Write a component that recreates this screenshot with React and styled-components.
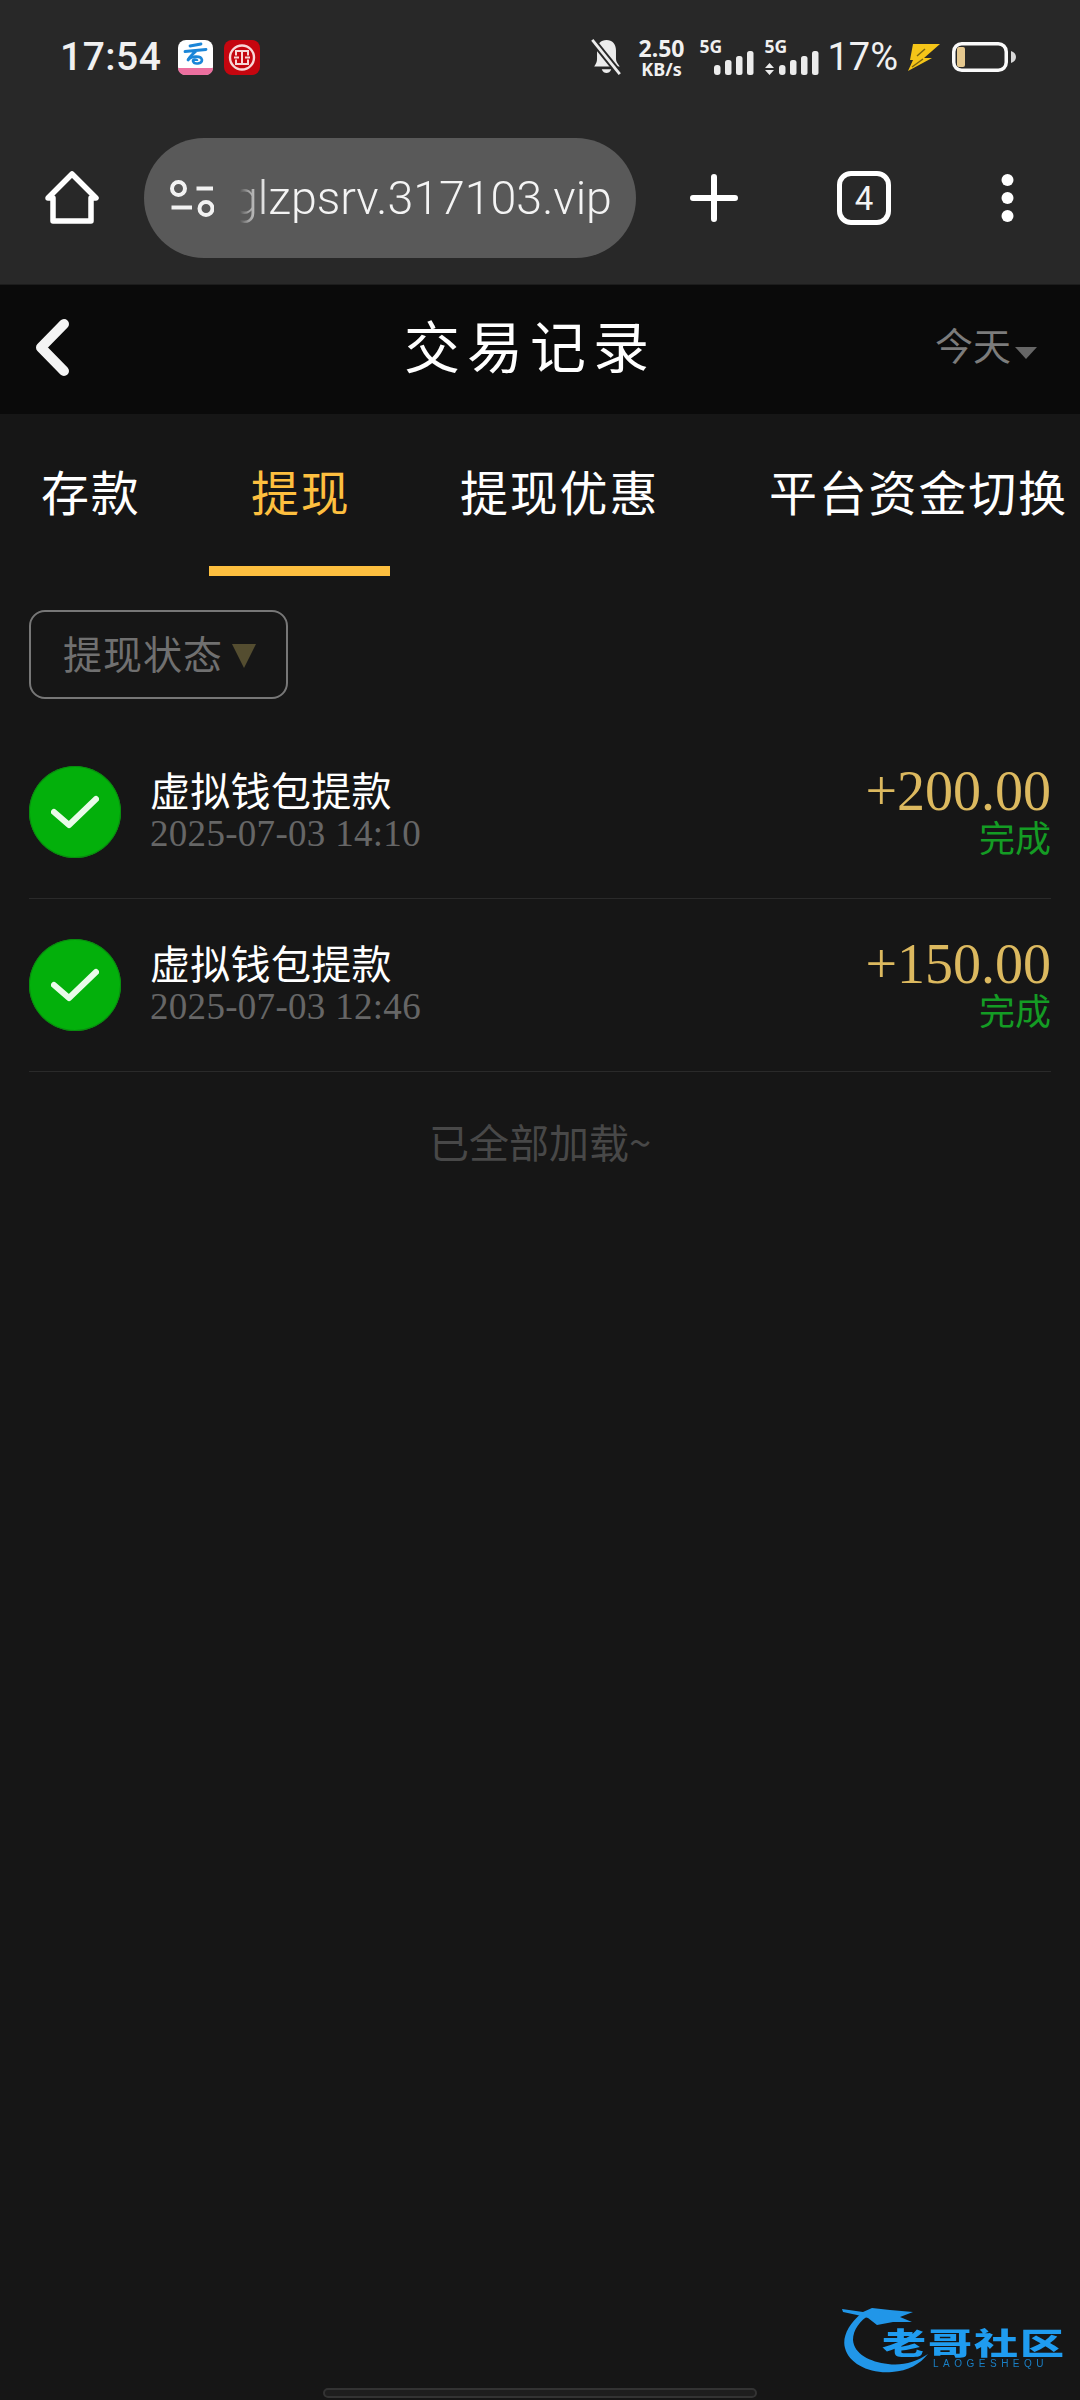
import React from "react";
import styled, { createGlobalStyle } from "styled-components";

const CJK = `"Noto Sans CJK SC", sans-serif`;
const SERIF_CJK = `"Liberation Serif", "Noto Sans CJK SC", serif`;

const Global = createGlobalStyle`
  html, body {
    margin: 0;
    padding: 0;
    background: #161616;
  }
`;
const Page = styled.div`
  position: relative;
  width: 1080px;
  height: 2400px;
  overflow: hidden;
  display: flex;
  flex-direction: column;
  background: #161616;
  font-family: ${CJK};
`;
const Chrome = styled.div`
  height: 284px;
  background: #282828;
  border-bottom: 1px solid #1c1c1c;
  display: flex;
  flex-direction: column;
  flex-shrink: 0;
`;
const StatusBar = styled.div`
  height: 114px;
  display: flex;
  align-items: center;
  justify-content: space-between;
  padding: 0 64px 0 60px;
  color: #f0f0f0;
`;
const StatusGroup = styled.div`
  display: flex;
  align-items: center;
`;
const Clock = styled.div`
  font-family: Roboto, sans-serif;
  font-weight: 500;
  font-size: 39px;
  letter-spacing: 0.5px;
  margin-right: 17px;
`;
const StatusIcon = styled.svg`
  display: block;
  flex-shrink: 0;
  margin-left: ${(p) => p.$ml || 0}px;
`;
const Speed = styled.div`
  font-family: "Noto Sans", sans-serif;
  font-weight: 700;
  display: flex;
  flex-direction: column;
  align-items: center;
  line-height: 1;
  font-size: 23px;
  margin-left: ${(p) => p.$ml}px;
  small {
    font-size: 18px;
  }
`;
const Signal = styled.div`
  position: relative;
  width: 54px;
  height: 36px;
  margin-left: ${(p) => p.$ml}px;
  span {
    position: absolute;
    left: 0;
    top: -1px;
    line-height: 1;
    font-family: "Noto Sans", sans-serif;
    font-weight: 700;
    font-size: 17.5px;
  }
  svg {
    position: absolute;
    left: 0;
    bottom: 0;
  }
`;
const Percent = styled.div`
  font-family: Roboto, sans-serif;
  font-size: 38px;
  margin-left: 9px;
`;
const Toolbar = styled.div`
  height: 120px;
  margin-top: 24px;
  display: flex;
  align-items: center;
  padding: 0 0 0 45px;
`;
const ToolIcon = styled.svg`
  flex-shrink: 0;
  display: block;
  margin-left: ${(p) => p.$ml || 0}px;
`;
const UrlPill = styled.div`
  width: 492px;
  height: 120px;
  box-sizing: border-box;
  border-radius: 60px;
  background: #595959;
  margin-left: 45px;
  padding-left: 26px;
  display: flex;
  align-items: center;
  overflow: hidden;
  flex-shrink: 0;
`;
const UrlText = styled.div`
  font-family: Roboto, sans-serif;
  font-size: 46.5px;
  font-weight: 300;
  color: #f4f4f4;
  margin-left: 18px;
  white-space: nowrap;
  mask-image: linear-gradient(90deg, transparent 8px, rgba(0, 0, 0, 0.45) 16px, #000 36px);
`;
const TabCount = styled.div`
  width: 54px;
  height: 54px;
  box-sizing: border-box;
  border: 5px solid #fff;
  border-radius: 14px;
  color: #f4f4f4;
  font-family: Roboto, sans-serif;
  font-size: 33px;
  display: flex;
  align-items: center;
  justify-content: center;
  margin-left: 99px;
  flex-shrink: 0;
`;
const Header = styled.div`
  height: 129px;
  box-sizing: border-box;
  padding-bottom: 12px;
  background: #0a0a0a;
  display: flex;
  align-items: center;
  justify-content: center;
  position: relative;
  flex-shrink: 0;
`;
const BackIcon = styled.svg`
  position: absolute;
  left: 34px;
  top: 31px;
`;
const Title = styled.div`
  font-size: 56px;
  color: #fff;
  letter-spacing: 7px;
  margin-right: 20px;
`;
const DayPicker = styled.div`
  position: absolute;
  right: 43px;
  top: 0;
  bottom: 0;
  padding-bottom: 12px;
  display: flex;
  align-items: center;
  color: #7c7c7c;
  font-size: 38px;
`;
const Caret = styled.i`
  display: block;
  width: 0;
  height: 0;
  margin: ${(p) => p.$margin};
  border-left: ${(p) => p.$w / 2}px solid transparent;
  border-right: ${(p) => p.$w / 2}px solid transparent;
  border-top: ${(p) => p.$h}px solid ${(p) => p.$color};
`;
const Tabs = styled.div`
  display: flex;
  height: 182px;
  flex-shrink: 0;
  white-space: nowrap;
  overflow: hidden;
`;
const Tab = styled.div`
  width: ${(p) => p.$w}px;
  flex-shrink: 0;
  box-sizing: border-box;
  padding-top: 41px;
  padding-left: ${(p) => p.$pl}px;
  font-size: 48px;
  line-height: 70px;
  color: ${(p) => (p.$active ? "#fdbf3f" : "#fff")};
  letter-spacing: 1.8px;
  position: relative;
  &::after {
    content: "";
    display: ${(p) => (p.$active ? "block" : "none")};
    position: absolute;
    left: 0;
    bottom: 20px;
    width: 100%;
    height: 10px;
    background: #fdbf3f;
  }
`;
const Filters = styled.div`
  padding: 0 29px;
  margin-top: 14px;
  flex-shrink: 0;
`;
const FilterBtn = styled.div`
  width: 259px;
  height: 89px;
  box-sizing: border-box;
  border: 2px solid #777;
  border-radius: 16px;
  display: flex;
  align-items: center;
  padding-left: 32px;
  padding-bottom: 5px;
  font-size: 39px;
  letter-spacing: 1px;
  color: #707070;
`;
const List = styled.div`
  margin: 27px 29px 0;
`;
const Row = styled.div`
  height: 173px;
  box-sizing: border-box;
  border-bottom: 1px solid #2a2a2a;
  display: flex;
  align-items: flex-start;
  padding-top: 40px;
`;
const StatusDot = styled.div`
  width: 92px;
  height: 92px;
  border-radius: 50%;
  background: #03b00b;
  box-shadow: inset 0 0 0 1px #0a8a10;
  display: flex;
  align-items: center;
  justify-content: center;
  flex-shrink: 0;
`;
const RowInfo = styled.div`
  margin-left: 29px;
  margin-top: -1px;
  flex: 1;
`;
const RowTitle = styled.div`
  font-size: 40px;
  line-height: 48px;
  letter-spacing: 0.3px;
  color: #fff;
`;
const RowTime = styled.div`
  font-family: ${SERIF_CJK};
  font-size: 37px;
  line-height: 41px;
  letter-spacing: 0.3px;
  color: #666;
`;
const RowRight = styled.div`
  text-align: right;
  margin-top: -2px;
`;
const Amount = styled.div`
  font-family: ${SERIF_CJK};
  font-size: 56px;
  line-height: 54px;
  color: #dcb95f;
`;
const Status = styled.div`
  font-size: 36px;
  line-height: 36px;
  color: #149c24;
`;
const LoadedAll = styled.div`
  text-align: center;
  font-size: 40px;
  line-height: 54px;
  color: #484848;
  margin-top: 42px;
`;
const Watermark = styled.div`
  position: absolute;
  left: 842px;
  top: 2304px;
  width: 224px;
  height: 72px;
  filter: blur(0.5px);
`;
const WatermarkName = styled.div`
  position: absolute;
  left: 40px;
  top: 22px;
  font-size: 44px;
  line-height: 30px;
  font-weight: 900;
  letter-spacing: 2px;
  color: #1f9cf0;
  white-space: nowrap;
  transform: scaleY(0.68);
`;
const WatermarkSub = styled.div`
  position: absolute;
  left: 91px;
  top: 55px;
  font-family: "Liberation Sans", sans-serif;
  font-size: 10px;
  line-height: 10px;
  letter-spacing: 4.5px;
  color: #1a7fc4;
  white-space: nowrap;
`;
const HomeBar = styled.div`
  position: absolute;
  left: 323px;
  bottom: 2px;
  width: 434px;
  height: 10px;
  box-sizing: border-box;
  background: #1e1e1e;
  border: 2px solid #333;
  border-radius: 5px;
`;

function Bars({ arrows }) {
  return (
    <svg width="55" height="24" viewBox="0 0 55 24" fill="#ececec">
      {arrows && <path d="M5.500 12l4.500 5H1zM5.500 24L1 19h9z" />}
      <rect x="15" y="14" width="6.500" height="10" rx="3" />
      <rect x="26" y="9" width="6.500" height="15" rx="2.500" />
      <rect x="37" y="5" width="6.500" height="19" rx="2.500" />
      <rect x="48" y="0" width="6.500" height="24" rx="2.500" />
    </svg>
  );
}

function Record({ time, amount }) {
  return (
    <Row>
      <StatusDot>
        <svg width="48" height="36" viewBox="0 0 48 36" fill="none">
          <path d="M3 18 L18 31 L45 5" stroke="#e9fbe9" strokeWidth="6" strokeLinecap="round" strokeLinejoin="round" />
        </svg>
      </StatusDot>
      <RowInfo>
        <RowTitle>虚拟钱包提款</RowTitle>
        <RowTime>{time}</RowTime>
      </RowInfo>
      <RowRight>
        <Amount>{amount}</Amount>
        <Status>完成</Status>
      </RowRight>
    </Row>
  );
}

export default function App() {
  return (
    <Page>
      <Global />
      <Chrome>
        <StatusBar>
          <StatusGroup>
            <Clock>17:54</Clock>
            <StatusIcon width="35" height="35" viewBox="0 0 35 35">
              <rect width="35" height="35" rx="8" fill="#fff" />
              <path d="M0 28h35v0a7 7 0 0 1-7 7H7a7 7 0 0 1-7-7z" fill="#ec6f9f" />
              <path d="M12 6l11-2M7 11.500l21-2M18 11c-3 3-7 6-8 9" stroke="#1b86d8" strokeWidth="2.800" fill="none" strokeLinecap="round" />
              <path d="M10 20c3-4 13-5 14 0 0 4-8 5-9 1 0-2 4-2 4 0" stroke="#1b86d8" strokeWidth="2.600" fill="none" />
            </StatusIcon>
            <StatusIcon width="36" height="35" viewBox="0 0 36 35" $ml={11}>
              <rect width="36" height="35" rx="8" fill="#c5060f" />
              <circle cx="18" cy="17.500" r="12" stroke="#f7d8d8" strokeWidth="2.400" fill="none" />
              <path d="M12 15.500v-4.500h12v4.500M12 19.500v4.500h12v-4.500M18 11v13M10 17.500h5M21 17.500h5" stroke="#f7d8d8" strokeWidth="2" fill="none" />
            </StatusIcon>
          </StatusGroup>
          <StatusGroup>
            <StatusIcon width="31" height="36" viewBox="0 0 32 38" fill="#ececec">
              <path d="M16 1c6 0 10 4 10 11v9c0 3 2 5 4 8H3c2-3 3-5 3-8v-9C6 5 10 1 16 1z" />
              <path d="M11 32h10c-1 3-3 4-5 4s-4-1-5-4z" />
              <path d="M1 1l29 36" stroke="#282828" strokeWidth="7" />
              <path d="M1 1l29 36" stroke="#ececec" strokeWidth="3" />
            </StatusIcon>
            <Speed $ml={17}>
              2.50
              <small>KB/s</small>
            </Speed>
            <Signal $ml={15}>
              <span>5G</span>
              <Bars />
            </Signal>
            <Signal $ml={11}>
              <span>5G</span>
              <Bars arrows />
            </Signal>
            <Percent>17%</Percent>
            <StatusIcon width="33" height="28" viewBox="0 0 33 28" $ml={10}>
              <path d="M5 1h27L16 15h8L0 28l5-11H2z" fill="#f5c518" />
              <path d="M9 13l8-7M4 24l11-8" stroke="#7a6510" strokeWidth="1.500" />
            </StatusIcon>
            <StatusIcon width="64" height="30" viewBox="0 0 64 30" $ml={11}>
              <rect x="1.750" y="1.750" width="52.500" height="26.500" rx="8" fill="none" stroke="#fafafa" strokeWidth="3.500" />
              <rect x="5" y="5" width="8" height="20" rx="2" fill="#e5c88f" />
              <path d="M59 9c3 1 5 3 5 6s-2 5-5 6z" fill="#d8d8d8" />
            </StatusIcon>
          </StatusGroup>
        </StatusBar>
        <Toolbar>
          <ToolIcon width="54" height="54" viewBox="0 0 54 54" fill="none">
            <path d="M3 27 L27 3 L51 27 H46 V50 H8 V27z" stroke="#fff" strokeWidth="5.500" strokeLinejoin="round" strokeLinecap="round" />
          </ToolIcon>
          <UrlPill>
            <ToolIcon width="44" height="37" viewBox="0 0 44 37" fill="none">
              <circle cx="8.500" cy="8.500" r="6.500" stroke="#f2f2f2" strokeWidth="4" />
              <circle cx="36" cy="28.500" r="6.500" stroke="#f2f2f2" strokeWidth="4" />
              <path d="M26.500 8.500H43M1.500 27.500H22" stroke="#f2f2f2" strokeWidth="4" />
            </ToolIcon>
            <UrlText>glzpsrv.317103.vip</UrlText>
          </UrlPill>
          <ToolIcon width="48" height="48" viewBox="0 0 48 48" $ml={54}>
            <path d="M3 24h42M24 3v42" stroke="#fff" strokeWidth="6" strokeLinecap="round" />
          </ToolIcon>
          <TabCount>4</TabCount>
          <ToolIcon width="13" height="48" viewBox="0 0 13 48" fill="#fff" $ml={110}>
            <circle cx="6.500" cy="6" r="6" />
            <circle cx="6.500" cy="24" r="6" />
            <circle cx="6.500" cy="42" r="6" />
          </ToolIcon>
        </Toolbar>
      </Chrome>
      <Header>
        <BackIcon width="42" height="64" viewBox="0 0 42 64" fill="none">
          <path d="M30 8 L7 31.500 L30 55" stroke="#f4f4f4" strokeWidth="10" strokeLinecap="round" strokeLinejoin="round" />
        </BackIcon>
        <Title>交易记录</Title>
        <DayPicker>
          今天
          <Caret $w={22} $h={12} $color="#666" $margin="18px 0 0 4px" />
        </DayPicker>
      </Header>
      <Tabs>
        <Tab $w={209} $pl={41}>存款</Tab>
        <Tab $w={181} $pl={42} $active>提现</Tab>
        <Tab $w={379} $pl={70}>提现优惠</Tab>
        <Tab $w={311} $pl={0}>平台资金切换</Tab>
      </Tabs>
      <Filters>
        <FilterBtn>
          提现状态
          <Caret $w={24} $h={24} $color="#544d30" $margin="8px 0 0 9px" />
        </FilterBtn>
      </Filters>
      <List>
        <Record time="2025-07-03 14:10" amount="+200.00" />
        <Record time="2025-07-03 12:46" amount="+150.00" />
      </List>
      <LoadedAll>已全部加载~</LoadedAll>
      <Watermark>
        <svg width="90" height="72" viewBox="0 0 90 72" fill="#2196e8">
          <path d="M20 9C6 20 0 34 3 44c4 16 25 26 47 24 16-1 28-8 36-18-12 8-26 12-40 10C28 58 12 50 11 36c0-10 7-20 17-25z" />
          <path d="M0 5l21 3 9-4 18 2 23 2-13 5 12 5-19 0-16 3-9-7-11-3-14-3z" />
        </svg>
        <WatermarkName>老哥社区</WatermarkName>
        <WatermarkSub>LAOGESHEQU</WatermarkSub>
      </Watermark>
      <HomeBar />
    </Page>
  );
}
